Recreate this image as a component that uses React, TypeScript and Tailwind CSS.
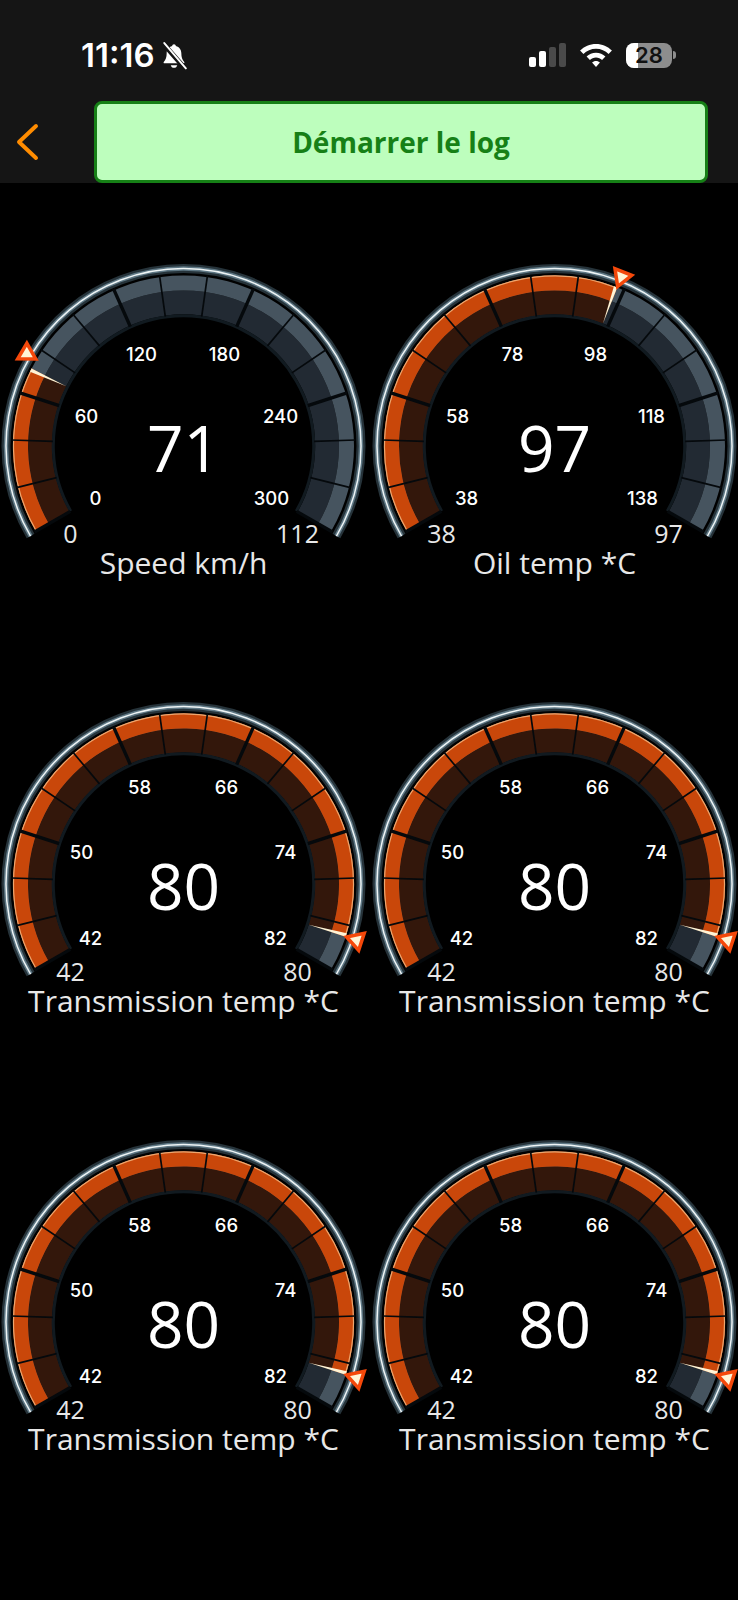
import React from 'react'

type GaugeProps = {
    title: string
    value: string
    min: string
    max: string
    ticks: string[]
    labelPos: number[][]
    angle: number
    markerAngle: number
}

const CX = 183.5
const CY = 263
const TEXT_Y = 257

const R_OUT = 170.5
const R_MID = 155.5
const R_IN = 131.7
const START = -120
const STEP = 16

const pt = (deg: number, r: number) => {
    const a = (deg * Math.PI) / 180
    return [CX + r * Math.sin(a), CY - r * Math.cos(a)]
}

const arc = (a0: number, a1: number, r: number) => {
    const [x0, y0] = pt(a0, r)
    const [x1, y1] = pt(a1, r)
    return `M${x0} ${y0}A${r} ${r} 0 ${a1 - a0 > 180 ? 1 : 0} 1 ${x1} ${y1}`
}

const sector = (a0: number, a1: number, r0: number, r1: number) => {
    const [x0, y0] = pt(a0, r0)
    const [x1, y1] = pt(a1, r0)
    const [x2, y2] = pt(a1, r1)
    const [x3, y3] = pt(a0, r1)
    const big = a1 - a0 > 180 ? 1 : 0
    return `M${x0} ${y0}A${r0} ${r0} 0 ${big} 1 ${x1} ${y1}L${x2} ${y2}A${r1} ${r1} 0 ${big} 0 ${x3} ${y3}Z`
}

const Marker = ({ angle }: { angle: number }) => {
    const [x, y] = pt(angle, 171.5)
    return (
        <g transform={`translate(${x} ${y}) rotate(${angle})`}>
            <polygon points="0,0 -9,-15.6 9,-15.6" fill="#fff4d6" stroke="#f5480a" strokeWidth="3.5" strokeLinejoin="miter" />
        </g>
    )
}

const Gauge = ({ title, value, min, max, ticks, labelPos, angle, markerAngle }: GaugeProps) => {
    const END = -START
    const tickList = Array.from({ length: 16 }, (_, i) => i)
    const [ax, ay] = pt(angle, R_OUT)
    const [bx, by] = pt(angle - 1.2, R_OUT)
    const [cx2, cy2] = pt(angle, R_IN)
    return (
        <svg viewBox="0 0 367 438" className="w-[367px] h-[438px] overflow-visible">
            <path d={arc(START - 0.5, END + 0.5, 177.5)} fill="none" stroke="#26333a" strokeWidth="9" />
            <path d={arc(START - 0.5, END + 0.5, 177.5)} fill="none" stroke="#5d7683" strokeWidth="4.5" />
            <path d={arc(START - 0.5, END + 0.5, 177.5)} fill="none" stroke="#eef4f5" strokeWidth="1.5" />

            <path d={sector(START, END, R_MID, R_IN)} fill="#222a33" />
            <path d={sector(START, END, R_OUT, R_MID)} fill="#46545f" />
            <path d={sector(START, angle, R_MID, R_IN)} fill="#33170b" />
            <path d={sector(START, angle, R_OUT, R_MID)} fill="#c9470a" />
            <path d={arc(START, angle, R_OUT - 0.5)} fill="none" stroke="#eda66e" strokeWidth="1.2" />
            <path d={arc(START, END, R_IN - 1.5)} fill="none" stroke="#111a20" strokeWidth="3" />

            {tickList.map((i) => {
                const a = START + i * STEP
                const [x0, y0] = pt(a, R_OUT + 1.5)
                const [x1, y1] = pt(a, R_IN - 1)
                return <line key={i} x1={x0} y1={y0} x2={x1} y2={y1} stroke="#05090c" strokeWidth={i % 3 === 0 ? 3.4 : 1.7} />
            })}

            <polygon points={`${ax},${ay} ${bx},${by} ${cx2},${cy2}`} fill="#fff4d6" />
            <Marker angle={markerAngle} />

            {ticks.map((t, i) => (
                <text key={t + i} x={CX + labelPos[i][0]} y={TEXT_Y + labelPos[i][1]} textAnchor="middle" dominantBaseline="central" className="fill-white font-['Inter'] text-[18.5px] font-medium">
                    {t}
                </text>
            ))}
            <text x={CX} y={TEXT_Y + 7} textAnchor="middle" dominantBaseline="central" className="fill-white font-['Open_Sans'] text-[64px]">
                {value}
            </text>
            <text x={CX - 113} y={TEXT_Y + 93} textAnchor="middle" dominantBaseline="central" className="fill-[#e8e8e8] font-['Open_Sans'] text-[25px]">
                {min}
            </text>
            <text x={CX + 114} y={TEXT_Y + 93} textAnchor="middle" dominantBaseline="central" className="fill-[#e8e8e8] font-['Open_Sans'] text-[25px]">
                {max}
            </text>
            <text x={CX} y={TEXT_Y + 122} textAnchor="middle" dominantBaseline="central" className="fill-[#e8e8e8] font-['Open_Sans'] text-[30px]">
                {title}
            </text>
        </svg>
    )
}

const topPos = [[-88, 58], [-97, -24], [-42, -86], [41, -86], [97, -24], [88, 58]]
const transPos = [[-93, 60], [-102, -26], [-44, -91], [43, -91], [102, -26], [92, 60]]

const transmission = { title: 'Transmission temp *C', value: '80', min: '42', max: '80', ticks: ['42', '50', '58', '66', '74', '82'], labelPos: transPos, angle: 108, markerAngle: 108 }

const gauges: GaugeProps[] = [
    { title: 'Speed km/h', value: '71', min: '0', max: '112', ticks: ['0', '60', '120', '180', '240', '300'], labelPos: topPos, angle: -63, markerAngle: -59.5 },
    { title: 'Oil temp *C', value: '97', min: '38', max: '97', ticks: ['38', '58', '78', '98', '118', '138'], labelPos: topPos, angle: 21.6, markerAngle: 21.6 },
    transmission,
    transmission,
    transmission,
    transmission,
]

const BellOff = () => (
    <svg viewBox="0 0 26 26" className="w-[28px] h-[28px]">
        <path d="M13 2c-1 0-1.600.7-1.700 1.600C8 4.400 6.200 7 6.200 10.500c0 4-.9 6-2.700 8-.4.5-.1 1.300.6 1.300h17.800c.7 0 1-.8.6-1.300-1.800-2-2.700-4-2.700-8 0-3.500-1.800-6.100-5.100-6.900C14.600 2.700 14 2 13 2z" fill="#fff" />
        <path d="M10 21.500c.3 1.500 1.500 2.500 3 2.500s2.700-1 3-2.500z" fill="#fff" />
        <path d="M3 1.500 23.500 25" stroke="#151515" strokeWidth="4.500" />
        <path d="M4 1 24 24.500" stroke="#fff" strokeWidth="1.800" strokeLinecap="round" />
    </svg>
)

const Signal = () => (
    <div className="flex items-end gap-[3px] h-[24px]">
        <div className="w-[7px] h-[10px] rounded-[2px] bg-white" />
        <div className="w-[7px] h-[16px] rounded-[2px] bg-white" />
        <div className="w-[7px] h-[20px] rounded-[2px] bg-[#4a4a4a]" />
        <div className="w-[7px] h-[24px] rounded-[2px] bg-[#4a4a4a]" />
    </div>
)

const Wifi = () => (
    <svg viewBox="1.800 2.500 28.400 20.500" className="w-[32px] h-[23px]">
        <path d="M16 2.500C10.500 2.500 5.500 4.700 1.800 8.400l3 3.100C7.700 8.600 11.600 6.800 16 6.800s8.300 1.800 11.200 4.700l3-3.100C26.500 4.700 21.500 2.500 16 2.500z" fill="#fff" />
        <path d="M16 10.200c-3.300 0-6.200 1.300-8.400 3.400l3 3.100c1.400-1.300 3.300-2.200 5.400-2.200s4 .9 5.400 2.200l3-3.100c-2.200-2.100-5.100-3.400-8.400-3.400z" fill="#fff" />
        <path d="M16 17.600c-1.400 0-2.600.5-3.500 1.400L16 23l3.500-4c-.9-.9-2.100-1.400-3.500-1.400z" fill="#fff" />
    </svg>
)

const Battery = () => (
    <div className="flex items-center gap-[1px]">
        <div className="relative w-[46px] h-[25px] rounded-[8px] bg-[#8d8d8d] overflow-hidden">
            <div className="w-[12px] h-full bg-white" />
            <span className="absolute inset-0 flex items-center justify-center font-['Inter'] text-[22px] font-semibold text-[#111111]">28</span>
        </div>
        <div className="w-[3px] h-[8px] rounded-r-full bg-[#8d8d8d]" />
    </div>
)

const App = () => {
    return (
        <div className="min-h-screen bg-black w-[738px]">
            <header className="h-[183px] bg-[#151515]">
                <div className="h-[101px] flex items-center justify-between pl-[81px] pr-[62px] pt-[9px]">
                    <div className="flex items-center gap-[5px] pt-[2px]">
                        <span className="font-['Inter'] text-[33px] font-semibold text-white">11:16</span>
                        <BellOff />
                    </div>
                    <div className="flex items-center gap-[14px]">
                        <Signal />
                        <Wifi />
                        <Battery />
                    </div>
                </div>
                <div className="flex items-center h-[82px]">
                    <div className="w-[94px] flex pl-[15px]">
                        <svg viewBox="0 0 24 38" className="w-[24px] h-[38px]">
                            <path d="M21 3 4 19l17 16" fill="none" stroke="#ff8c00" strokeWidth="4" strokeLinecap="round" strokeLinejoin="round" />
                        </svg>
                    </div>
                    <button className="w-[614px] h-[82px] rounded-[8px] border-[3px] border-[#168016] bg-[#bdfebd] font-['Open_Sans'] text-[28px] font-bold text-[#168016]">
                        Démarrer le log
                    </button>
                </div>
            </header>
            <div className="grid grid-cols-[371px_367px]">
                {gauges.map((g, i) => (
                    <Gauge key={i} {...g} />
                ))}
            </div>
        </div>
    )
}

export default App
